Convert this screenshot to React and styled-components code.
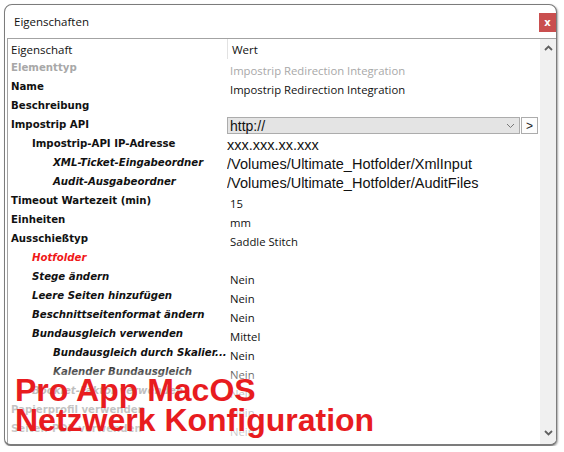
import React from 'react';
import styled, { createGlobalStyle } from 'styled-components';

const GlobalStyle = createGlobalStyle`
  html, body {
    margin: 0;
    padding: 0;
    background: #ffffff;
  }
`;

const Window = styled.div`
  position: relative;
  margin: 4px 0 0 4px;
  width: 553px;
  height: 442px;
  border: 1px solid #7c7c7c;
  border-bottom-width: 2px;
  border-radius: 8px 8px 7px 7px;
  box-shadow: 1px 1px 2px rgba(0, 0, 0, 0.35);
  background: #ffffff;
  display: flex;
  flex-direction: column;
  overflow: hidden;
  box-sizing: border-box;
`;

const TitleBar = styled.div`
  height: 33px;
  flex: none;
  display: flex;
  align-items: center;
  justify-content: space-between;
  padding-left: 9px;
  font-family: "Open Sans", "Noto Sans", sans-serif;
  font-size: 11.5px;
  color: #111;
`;

const CloseButton = styled.div`
  width: 17px;
  height: 19px;
  margin-top: 1px;
  background: #c94f4f;
  color: #fff;
  font-family: "DejaVu Sans", sans-serif;
  font-weight: bold;
  font-size: 10px;
  display: flex;
  align-items: center;
  justify-content: center;
`;

const Panel = styled.div`
  flex: 1;
  margin-left: 2px;
  border-top: 1px solid #a3a3a3;
  border-left: 1px solid #a3a3a3;
  display: flex;
  position: relative;
  overflow: hidden;
`;

const Grid = styled.div`
  flex: 1;
  display: flex;
  flex-direction: column;
`;

const Row = styled.div`
  display: grid;
  grid-template-columns: 219px 1fr;
  height: ${p => (p.$header ? 20 : 19)}px;
  flex: none;
`;

const HeaderCell = styled.div`
  font-family: "Open Sans", "Noto Sans", sans-serif;
  font-size: 11.5px;
  color: #111;
  padding-left: ${p => (p.$divided ? 4 : 3)}px;
  display: flex;
  align-items: center;
  border-left: ${p => (p.$divided ? '1px solid #e2e2e2' : 'none')};
`;

const Label = styled.div`
  font-family: "DejaVu Sans Condensed", "DejaVu Sans", sans-serif;
  font-stretch: condensed;
  font-weight: bold;
  font-size: 11.3px;
  font-style: ${p => (p.$italic ? 'italic' : 'normal')};
  color: ${p => (p.$red ? '#f01818' : p.$dim ? '#a8a8a8' : '#111')};
  padding-left: ${p => 3 + p.$level * 21}px;
  padding-top: 2px;
  white-space: nowrap;
  overflow: hidden;
`;

const Value = styled.div`
  font-family: ${p => (p.$path ? '"Liberation Sans", Arial, sans-serif' : '"Open Sans", "Noto Sans", sans-serif')};
  font-size: ${p => (p.$path ? '14.5px' : '11.3px')};
  color: ${p => (p.$dim ? '#a8a8a8' : '#111')};
  padding-left: ${p => (p.$path ? 0 : 3)}px;
  padding-top: ${p => (p.$path ? 2 : 4)}px;
  white-space: nowrap;
  overflow: hidden;
`;

const ComboWrap = styled.div`
  display: flex;
  align-items: center;
  gap: 1px;
  padding-right: 2px;
`;

const Combo = styled.div`
  flex: 1;
  height: 15px;
  border: 1px solid #acacac;
  background-color: #e4e4e4;
  background-image: radial-gradient(#d4d4d4 0.6px, transparent 0.7px);
  background-size: 2px 2px;
  display: flex;
  align-items: center;
  justify-content: space-between;
  padding: 0 4px 0 2px;
  font-family: "Liberation Sans", Arial, sans-serif;
  font-size: 14px;
  color: #111;
`;

const SideButton = styled.div`
  width: 15px;
  height: 15px;
  border: 1px solid #acacac;
  background: #fdfdfd;
  font-family: "Liberation Sans", Arial, sans-serif;
  font-size: 12px;
  display: flex;
  align-items: center;
  justify-content: center;
  color: #222;
`;

const Scrollbar = styled.div`
  width: 16px;
  flex: none;
  background: #f0f0f0;
  display: flex;
  flex-direction: column;
  justify-content: space-between;
  align-items: center;
  padding: 6px 0 8px;
`;

const Fade = styled.div`
  position: absolute;
  left: 0;
  right: 16px;
  bottom: 0;
  height: 82px;
  background: linear-gradient(
    rgba(255, 255, 255, 0) 0,
    rgba(255, 255, 255, 0.72) 30%,
    rgba(255, 255, 255, 0.78) 100%
  );
  pointer-events: none;
`;

const Overlay = styled.div`
  position: absolute;
  left: 10px;
  top: 370px;
  font-family: "Liberation Sans", Arial, sans-serif;
  font-weight: bold;
  font-size: 32px;
  line-height: 30px;
  color: #e81c1f;
  white-space: nowrap;
`;

const Chevron = ({ up }) => (
  <svg width="9" height="6" viewBox="0 0 9 6">
    <path
      d={up ? 'M1 5 L4.5 1.5 L8 5' : 'M1 1 L4.5 4.5 L8 1'}
      fill="none"
      stroke="#606060"
      strokeWidth="1.8"
    />
  </svg>
);

const rows = [
  { label: 'Elementtyp', value: 'Impostrip Redirection Integration', dim: true },
  { label: 'Name', value: 'Impostrip Redirection Integration' },
  { label: 'Beschreibung', value: '' },
  { label: 'Impostrip API', combo: 'http://' },
  { label: 'Impostrip-API IP-Adresse', level: 1, value: 'xxx.xxx.xx.xxx', path: true },
  { label: 'XML-Ticket-Eingabeordner', level: 2, italic: true, value: '/Volumes/Ultimate_Hotfolder/XmlInput', path: true },
  { label: 'Audit-Ausgabeordner', level: 2, italic: true, value: '/Volumes/Ultimate_Hotfolder/AuditFiles', path: true },
  { label: 'Timeout Wartezeit (min)', value: '15' },
  { label: 'Einheiten', value: 'mm' },
  { label: 'Ausschießtyp', value: 'Saddle Stitch' },
  { label: 'Hotfolder', level: 1, italic: true, red: true, value: '' },
  { label: 'Stege ändern', level: 1, italic: true, value: 'Nein' },
  { label: 'Leere Seiten hinzufügen', level: 1, italic: true, value: 'Nein' },
  { label: 'Beschnittseitenformat ändern', level: 1, italic: true, value: 'Nein' },
  { label: 'Bundausgleich verwenden', level: 1, italic: true, value: 'Mittel' },
  { label: 'Bundausgleich durch Skalier...', level: 2, italic: true, value: 'Nein' },
  { label: 'Kalender Bundausgleich', level: 2, italic: true, value: 'Nein' },
  { label: 'Booklet-Faktor verwenden', level: 1, italic: true, value: 'Nein' },
  { label: 'Papierprofil verwenden', value: 'Nein' },
  { label: 'Seiten-PDF verwenden', value: 'Nein' },
];

const App = () => {
  return (
    <>
      <GlobalStyle />
      <Window>
        <TitleBar>
          <span>Eigenschaften</span>
          <CloseButton>x</CloseButton>
        </TitleBar>
        <Panel>
          <Grid>
            <Row $header>
              <HeaderCell>Eigenschaft</HeaderCell>
              <HeaderCell $divided>Wert</HeaderCell>
            </Row>
            {rows.map(row => (
              <Row key={row.label}>
                <Label
                  $level={row.level || 0}
                  $italic={row.italic}
                  $red={row.red}
                  $dim={row.dim}
                >
                  {row.label}
                </Label>
                {row.combo ? (
                  <ComboWrap>
                    <Combo>
                      <span>{row.combo}</span>
                      <svg width="9" height="6" viewBox="0 0 9 6">
                        <path d="M1 1 L4.5 4.5 L8 1" fill="none" stroke="#777" strokeWidth="1" />
                      </svg>
                    </Combo>
                    <SideButton>&gt;</SideButton>
                  </ComboWrap>
                ) : (
                  <Value $path={row.path} $dim={row.dim}>
                    {row.value}
                  </Value>
                )}
              </Row>
            ))}
          </Grid>
          <Scrollbar>
            <Chevron up />
            <Chevron />
          </Scrollbar>
          <Fade />
        </Panel>
        <Overlay>
          Pro App MacOS
          <br />
          Netzwerk Konfiguration
        </Overlay>
      </Window>
    </>
  );
};

export default App;
